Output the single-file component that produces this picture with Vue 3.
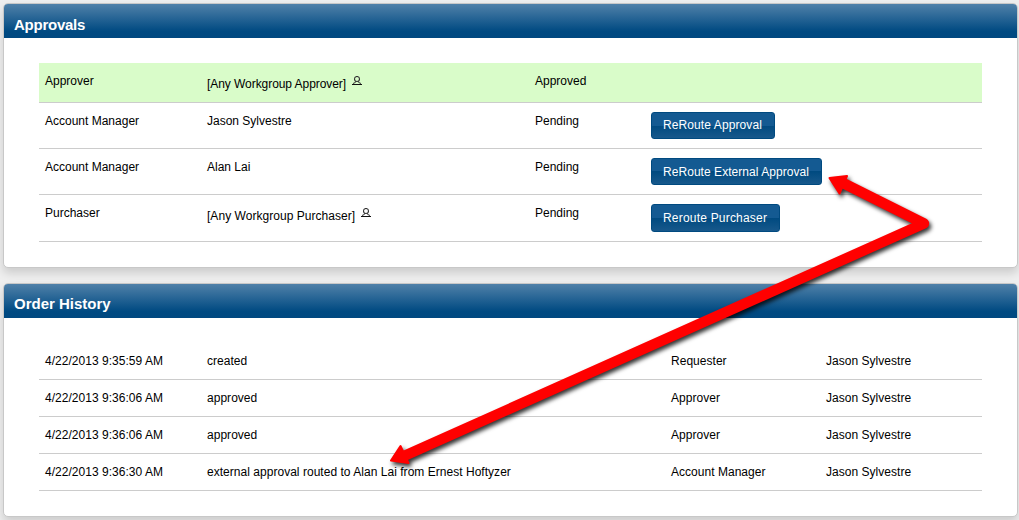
<script setup>
const approvals = [
  { role: 'Approver', name: '[Any Workgroup Approver]', group: true, status: 'Approved', done: true },
  { role: 'Account Manager', name: 'Jason Sylvestre', status: 'Pending', action: 'ReRoute Approval', cls: 'b1' },
  { role: 'Account Manager', name: 'Alan Lai', status: 'Pending', action: 'ReRoute External Approval', cls: 'b2' },
  { role: 'Purchaser', name: '[Any Workgroup Purchaser]', group: true, status: 'Pending', action: 'Reroute Purchaser', cls: 'b3' }
]
const history = [
  { date: '4/22/2013 9:35:59 AM', text: 'created', role: 'Requester', user: 'Jason Sylvestre' },
  { date: '4/22/2013 9:36:06 AM', text: 'approved', role: 'Approver', user: 'Jason Sylvestre' },
  { date: '4/22/2013 9:36:06 AM', text: 'approved', role: 'Approver', user: 'Jason Sylvestre' },
  { date: '4/22/2013 9:36:30 AM', text: 'external approval routed to Alan Lai from Ernest Hoftyzer', role: 'Account Manager', user: 'Jason Sylvestre' }
]
</script>

<template>
  <main class="page">
    <section class="panel approvals">
      <h2>Approvals</h2>
      <div class="rows">
        <div v-for="(a, i) in approvals" :key="i" class="row" :class="{ done: a.done, last: i === 3 }">
          <span class="role">{{ a.role }}</span>
          <span class="name" :class="{ group: a.group }"><span>{{ a.name }}</span><svg v-if="a.group" class="person" width="10" height="10" viewBox="0 0 10 10">
              <circle cx="5" cy="3" r="2.5" fill="none" stroke="#333" stroke-width="1.1" />
              <path d="M3.6 5.300L3.300 6.500L1 7.500M6.400 5.300L6.700 6.500L9 7.500" fill="none" stroke="#333" />
              <path d="M0 8h10v1H0z" fill="#111" />
            </svg></span>
          <span class="status">{{ a.status }}</span>
          <span class="action"><button v-if="a.action" :class="a.cls">{{ a.action }}</button></span>
        </div>
      </div>
    </section>
    <section class="panel history">
      <h2>Order History</h2>
      <div class="rows">
        <div v-for="(h, i) in history" :key="i" class="row">
          <span>{{ h.date }}</span>
          <span>{{ h.text }}</span>
          <span>{{ h.role }}</span>
          <span>{{ h.user }}</span>
        </div>
      </div>
    </section>
    <svg class="arrow" width="1019" height="520" viewBox="0 0 1019 520">
      <g fill="#f00" stroke="#f00" stroke-linejoin="round">
        <path d="M843 183L924 223.500L404 456" fill="none" stroke-width="10.4" />
        <path d="M829.500 178L847 176L839.500 193.500Z" stroke-width="2" />
        <path d="M391 460.500L400.500 446L408.500 463Z" stroke-width="2" />
      </g>
    </svg>
  </main>
</template>

<style>
body { margin: 0; background: #efefef; }
</style>

<style scoped>
.page { position: relative; box-sizing: border-box; width: 1019px; height: 520px; padding: 3px 1px 0 3px; overflow: hidden; background: #efefef; font: 12px/14px "Liberation Sans", Arial, sans-serif; color: #000; }
.panel { box-sizing: border-box; width: 1015px; border: 1px solid #c8c8c8; border-radius: 5px; background: #fff; box-shadow: 0 5px 10px rgba(0,0,0,.15); overflow: hidden; }
.approvals { height: 265px; margin-bottom: 15px; }
.history { height: 234px; }
h2 { box-sizing: border-box; height: 34px; margin: 0; padding: 12px 10px 0; font-size: 15px; line-height: 18px; color: #fff; background: linear-gradient(#5081a9, #004a82 80%, #004880); }
.approvals h2 { letter-spacing: -.25px; }
.history h2 { padding-top: 11px; }
.rows { margin: 25px 35px 0; }
.row { display: grid; box-sizing: border-box; border-bottom: 1px solid #ccc; }
.approvals .row { grid-template-columns: 162px 328px 116px 1fr; height: 46px; padding: 11px 6px 0; }
.approvals .row.done { height: 40px; background: #d9fcc9; }
.approvals .row.last { height: 47px; }
.group { padding-top: 2px; }
.done .group { letter-spacing: -.06px; }
.last .group { letter-spacing: .04px; }
.person { margin-left: 6px; vertical-align: 2px; }
.action { margin-top: -2px; }
button { display: block; box-sizing: border-box; height: 27px; padding: 0 0 0 11px; border: 1px solid #004a80; border-radius: 3px; color: #fff; font: 12px/25px "Liberation Sans", Arial, sans-serif; text-align: left; white-space: nowrap; background: linear-gradient(#145a92 50%, #004a80 50%, #17588b); }
.b1 { width: 124px; letter-spacing: .1px; }
.b2 { width: 171px; letter-spacing: .05px; padding-top: 1px; }
.b3 { width: 129px; height: 28px; letter-spacing: .2px; }
.history .row { grid-template-columns: 162px 464px 155px 1fr; height: 37px; padding: 11px 6px 0; letter-spacing: .03px; }
.arrow { position: absolute; left: 0; top: 0; filter: drop-shadow(2px 3px 2px rgba(0,0,0,.8)); }
</style>
